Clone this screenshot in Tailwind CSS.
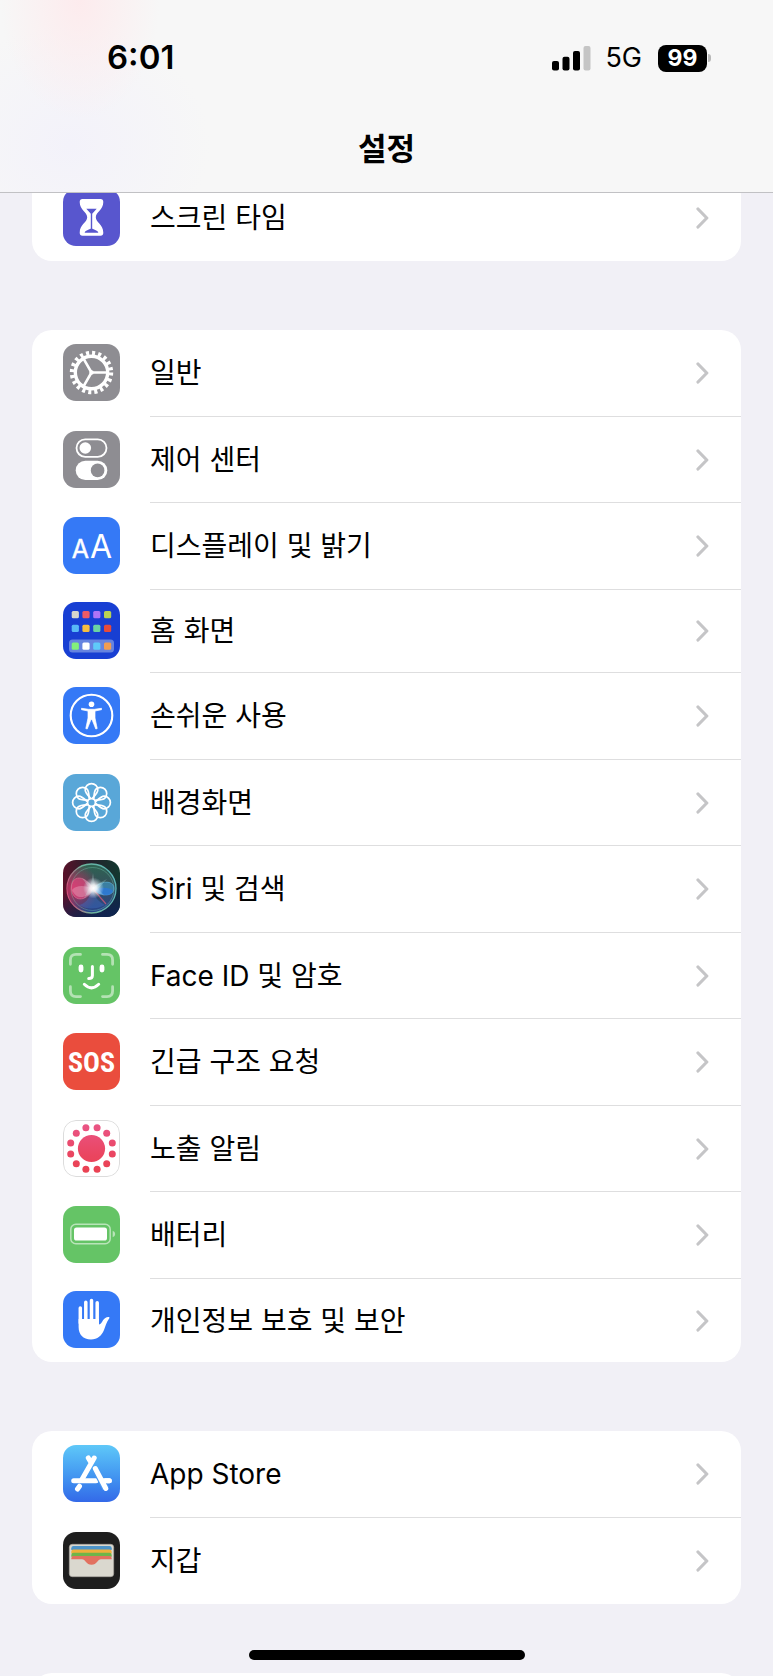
<!DOCTYPE html>
<html lang="ko">
<head>
    <meta charset="UTF-8">
    <meta name="viewport" content="width=device-width, initial-scale=1.0">
    <title>설정</title>
    <script src="https://cdn.jsdelivr.net/npm/@tailwindcss/browser@4"></script>
</head>
<body class="relative h-screen overflow-hidden bg-[#f1f0f6] font-['Inter','Noto_Sans_CJK_KR',sans-serif] text-black">
    <!-- Shared shapes -->
    <svg class="hidden" aria-hidden="true">
        <symbol id="chevron" viewBox="0 0 14 24">
            <path d="M3 3 L11.8 12 L3 21" fill="none" stroke="#c5c5c7" stroke-width="3.2" stroke-linecap="round" stroke-linejoin="round"/>
        </symbol>
        <symbol id="petal" viewBox="-28.5 -28.5 57 57">
            <path d="M-6.3 -12.6 A6.3 6.3 0 0 1 6.3 -12.6 C6.3 -9.8 4.5 -8.2 0 -3.2 C-4.5 -8.2 -6.3 -9.8 -6.3 -12.6Z" fill="none" stroke="#fff" stroke-width="1.7"/>
        </symbol>
    </svg>

    <!-- Header -->
    <header class="fixed inset-x-0 top-0 z-10 h-[193px] border-b border-[#c1c1c4] bg-[#f7f7f7] bg-[radial-gradient(ellipse_80px_120px_at_80px_0px,#fdebed,transparent),radial-gradient(ellipse_140px_120px_at_70px_145px,#f3f2fa,transparent)]">
        <div class="flex h-[116px] items-center justify-between pr-[62px] pl-[107px]">
            <time class="text-[33px] font-semibold">6:01</time>
            <div class="flex items-center">
                <svg class="h-[25px] w-[39px]" viewBox="0 0 39 25" role="img" aria-label="신호 세기">
                    <rect x="0" y="15" width="7" height="9.5" rx="2"/>
                    <rect x="10.5" y="10.7" width="7" height="13.8" rx="2"/>
                    <rect x="21" y="5" width="7" height="19.5" rx="2"/>
                    <rect x="31.5" y="0" width="7" height="24.5" rx="2" fill="#c5c5c5"/>
                </svg>
                <span class="ml-[14px] text-[27px]">5G</span>
                <div class="ml-4 flex h-[27px] w-[49px] items-center justify-center rounded-lg bg-black text-[23px] font-bold text-white">99</div>
                <div class="ml-px h-2 w-[3px] rounded-r-full bg-[#b8b8b8]"></div>
            </div>
        </div>
        <h1 class="flex h-[66px] items-center justify-center text-[31px] font-semibold">설정</h1>
    </header>

    <main class="flex flex-col gap-[69px] px-8 pt-[175px] text-[28px]">
        <ul class="shrink-0 overflow-hidden rounded-[20px] bg-white">
            <li class="h-[86px]">
                <a href="#" class="flex h-full gap-[30px] pl-[31px]">
                    <svg class="mt-[14px] size-[57px] shrink-0 rounded-[13px] bg-[#5856ce]" viewBox="0 0 57 57">
                        <path d="M19.5 10 H37.5 Q40.3 10 40.3 13 C40.3 21 32.8 23 32.8 28.3 C32.8 33.5 40.3 35.5 40.3 43.7 Q40.3 46.7 37.5 46.7 H19.5 Q16.7 46.7 16.7 43.7 C16.7 35.5 24.2 33.5 24.2 28.3 C24.2 23 16.7 21 16.7 13 Q16.7 10 19.5 10Z" fill="#fff"/>
                        <path d="M23.3 19.8 H33.7 L29.2 24.7 V39.5 C30.5 40.7 35.3 41.3 35.3 43.8 H21.7 C21.7 41.3 26.5 40.7 27.8 39.5 V24.7Z" fill="#5856ce"/>
                    </svg>
                    <span class="flex h-full flex-1 items-center justify-between pr-8">스크린 타임
                        <svg class="h-6 w-[14px]"><use href="#chevron"/></svg>
                    </span>
                </a>
            </li>
        </ul>

        <ul class="shrink-0 overflow-hidden rounded-[20px] bg-white">
            <li class="h-[87px]">
                <a href="#" class="flex h-full gap-[30px] pl-[31px]">
                    <svg class="mt-[14px] size-[57px] shrink-0 rounded-[13px] bg-[#8e8d92]" viewBox="0 0 57 57" fill="none" stroke="#fff">
                        <circle cx="28.5" cy="28.5" r="19" stroke-width="5.4" stroke-dasharray="3 2.969"/>
                        <circle cx="28.5" cy="28.5" r="16.2" stroke-width="3.4"/>
                        <path d="M28.5 28.5 H44 M28.5 28.5 L20.8 15.1 M28.5 28.5 L20.8 41.9" stroke-width="2.6"/>
                        <circle cx="28.5" cy="28.5" r="1.5" stroke-width="1.5"/>
                    </svg>
                    <span class="flex h-full flex-1 items-center justify-between border-b border-[#dededf] pr-8">일반
                        <svg class="h-6 w-[14px]"><use href="#chevron"/></svg>
                    </span>
                </a>
            </li>
            <li class="h-[86px]">
                <a href="#" class="flex h-full gap-[30px] pl-[31px]">
                    <svg class="mt-[14px] size-[57px] shrink-0 rounded-[13px] bg-[#8e8d92]" viewBox="0 0 57 57">
                        <rect x="13.5" y="8.4" width="30" height="17.4" rx="8.7" fill="none" stroke="#fff" stroke-width="1.8"/>
                        <circle cx="22.3" cy="17" r="5.8" fill="#fff"/>
                        <rect x="12.7" y="29.7" width="31.6" height="19.4" rx="9.7" fill="#fff"/>
                        <circle cx="34.6" cy="39.4" r="6.8" fill="#8e8d92"/>
                    </svg>
                    <span class="flex h-full flex-1 items-center justify-between border-b border-[#dededf] pr-8">제어 센터
                        <svg class="h-6 w-[14px]"><use href="#chevron"/></svg>
                    </span>
                </a>
            </li>
            <li class="h-[87px]">
                <a href="#" class="flex h-full gap-[30px] pl-[31px]">
                    <svg class="mt-[14px] size-[57px] shrink-0 rounded-[13px] bg-[#3579f6]" viewBox="0 0 57 57" fill="#fff" text-anchor="middle" aria-hidden="true">
                        <text x="17.3" y="40.5" font-size="25" stroke="#fff" stroke-width=".4">A</text>
                        <text x="38" y="40.5" font-size="32">A</text>
                    </svg>
                    <span class="flex h-full flex-1 items-center justify-between border-b border-[#dededf] pr-8">디스플레이 및 밝기
                        <svg class="h-6 w-[14px]"><use href="#chevron"/></svg>
                    </span>
                </a>
            </li>
            <li class="h-[83px]">
                <a href="#" class="flex h-full gap-[30px] pl-[31px]">
                    <svg class="mt-[12px] size-[57px] shrink-0 rounded-[13px] bg-[#183fd3]" viewBox="0 0 57 57">
                        <rect x="6" y="37.6" width="45" height="13" rx="3.5" fill="#6583e0"/>
                        <rect x="8.7" y="9" width="7.2" height="7.2" rx="1.5" fill="#d6d6cd"/>
                        <rect x="19.4" y="9" width="7.2" height="7.2" rx="1.5" fill="#ec5b66"/>
                        <rect x="30.2" y="9" width="7.2" height="7.2" rx="1.5" fill="#ae74f7"/>
                        <rect x="41" y="9" width="7.2" height="7.2" rx="1.5" fill="#b8d254"/>
                        <rect x="8.7" y="22.7" width="7.2" height="7.2" rx="1.5" fill="#58b9f7"/>
                        <rect x="19.4" y="22.7" width="7.2" height="7.2" rx="1.5" fill="#f5bd40"/>
                        <rect x="30.2" y="22.7" width="7.2" height="7.2" rx="1.5" fill="#6bd3a3"/>
                        <rect x="41" y="22.7" width="7.2" height="7.2" rx="1.5" fill="#e64b3c"/>
                        <rect x="8.7" y="40.6" width="7.2" height="7.2" rx="1.5" fill="#83f07b"/>
                        <rect x="19.4" y="40.6" width="7.2" height="7.2" rx="1.5" fill="#fff"/>
                        <rect x="30.2" y="40.6" width="7.2" height="7.2" rx="1.5" fill="#5fcaf9"/>
                        <rect x="41" y="40.6" width="7.2" height="7.2" rx="1.5" fill="#f19d52"/>
                    </svg>
                    <span class="flex h-full flex-1 items-center justify-between border-b border-[#dededf] pr-8">홈 화면
                        <svg class="h-6 w-[14px]"><use href="#chevron"/></svg>
                    </span>
                </a>
            </li>
            <li class="h-[87px]">
                <a href="#" class="flex h-full gap-[30px] pl-[31px]">
                    <svg class="mt-[14px] size-[57px] shrink-0 rounded-[13px] bg-[#3579f6]" viewBox="0 0 57 57">
                        <circle cx="28.5" cy="28.5" r="20.8" fill="none" stroke="#fff" stroke-width="2.1"/>
                        <circle cx="28.5" cy="17.2" r="2.8" fill="#fff"/>
                        <path d="M18.5 21.3 L25.5 22.3 H31.5 L38.5 21.3 L38.5 22.7 L32 24 V31 L34.2 41.5 L32.8 42 L29 32.5 H28 L24.2 42 L22.8 41.5 L25 31 V24 L18.5 22.7Z" fill="#fff" stroke="#fff" stroke-width=".7" stroke-linejoin="round"/>
                    </svg>
                    <span class="flex h-full flex-1 items-center justify-between border-b border-[#dededf] pr-8">손쉬운 사용
                        <svg class="h-6 w-[14px]"><use href="#chevron"/></svg>
                    </span>
                </a>
            </li>
            <li class="h-[86px]">
                <a href="#" class="flex h-full gap-[30px] pl-[31px]">
                    <svg class="mt-[14px] size-[57px] shrink-0 rounded-[13px] bg-[#59a7d8]" viewBox="-28.5 -28.5 57 57">
                        <use href="#petal" x="-28.5" y="-28.5" width="57" height="57"/>
                        <use href="#petal" x="-28.5" y="-28.5" width="57" height="57" transform="rotate(45)"/>
                        <use href="#petal" x="-28.5" y="-28.5" width="57" height="57" transform="rotate(90)"/>
                        <use href="#petal" x="-28.5" y="-28.5" width="57" height="57" transform="rotate(135)"/>
                        <use href="#petal" x="-28.5" y="-28.5" width="57" height="57" transform="rotate(180)"/>
                        <use href="#petal" x="-28.5" y="-28.5" width="57" height="57" transform="rotate(225)"/>
                        <use href="#petal" x="-28.5" y="-28.5" width="57" height="57" transform="rotate(270)"/>
                        <use href="#petal" x="-28.5" y="-28.5" width="57" height="57" transform="rotate(315)"/>
                        <circle r="3.8" fill="#59a7d8" stroke="#fff" stroke-width="1.5"/>
                    </svg>
                    <span class="flex h-full flex-1 items-center justify-between border-b border-[#dededf] pr-8">배경화면
                        <svg class="h-6 w-[14px]"><use href="#chevron"/></svg>
                    </span>
                </a>
            </li>
            <li class="h-[87px]">
                <a href="#" class="flex h-full gap-[30px] pl-[31px]">
                    <svg class="mt-[14px] size-[57px] shrink-0 rounded-[13px]" viewBox="0 0 57 57">
                        <defs>
                            <linearGradient id="siri-bg" x1="0" y1=".4" x2="1" y2=".3">
                                <stop offset="0" stop-color="#5c1029"/>
                                <stop offset=".5" stop-color="#27202c"/>
                                <stop offset="1" stop-color="#12382f"/>
                            </linearGradient>
                            <linearGradient id="siri-floor" x1=".3" y1="0" x2=".6" y2="1">
                                <stop offset=".45" stop-color="#0e2352" stop-opacity="0"/>
                                <stop offset="1" stop-color="#0e2352" stop-opacity=".9"/>
                            </linearGradient>
                            <linearGradient id="siri-orb" x1=".4" y1="0" x2=".5" y2="1">
                                <stop offset="0" stop-color="#2f7058"/>
                                <stop offset=".5" stop-color="#3a5564"/>
                                <stop offset="1" stop-color="#2a4a98"/>
                            </linearGradient>
                            <linearGradient id="siri-rim" x1="0" y1=".6" x2="1" y2=".4">
                                <stop offset="0" stop-color="#d24a78"/>
                                <stop offset=".4" stop-color="#6db39b"/>
                                <stop offset="1" stop-color="#5ab5b8"/>
                            </linearGradient>
                            <radialGradient id="siri-red" cx=".1" cy=".5" r=".55">
                                <stop offset="0" stop-color="#c22c5e"/>
                                <stop offset="1" stop-color="#c22c5e" stop-opacity="0"/>
                            </radialGradient>
                            <radialGradient id="siri-glow">
                                <stop offset="0" stop-color="#fff"/>
                                <stop offset=".3" stop-color="#fff" stop-opacity=".85"/>
                                <stop offset="1" stop-color="#d4f4ff" stop-opacity="0"/>
                            </radialGradient>
                        </defs>
                        <rect width="57" height="57" fill="url(#siri-bg)"/>
                        <rect width="57" height="57" fill="url(#siri-floor)"/>
                        <circle cx="28.5" cy="28.5" r="24.5" fill="url(#siri-orb)" fill-opacity=".85" stroke="url(#siri-rim)" stroke-width="1.3"/>
                        <circle cx="28.5" cy="28.5" r="24" fill="url(#siri-red)"/>
                        <circle cx="29.5" cy="29" r="21.5" fill="none" stroke="#7fd0b8" stroke-opacity=".35"/>
                        <path d="M30 29 C22 14 8 15 8.5 28 C9 42 23 43 30 29Z" fill="#e04a80" fill-opacity=".65" stroke="#ff9ab5" stroke-opacity=".6" stroke-width=".6"/>
                        <path d="M30 29 C24 26 14 24 9 30 C14 41 24 38 30 29Z" fill="#e7a5bd" fill-opacity=".45"/>
                        <path d="M30 29 C38 20 50 20 51 28 C51 37 38 37 30 29Z" fill="#3f9fd0" fill-opacity=".6" stroke="#74c9f2" stroke-opacity=".7" stroke-width=".6"/>
                        <path d="M30 29 C36 28 46 26 50 31 C47 38 37 36 30 29Z" fill="#2a78e0" fill-opacity=".7"/>
                        <path d="M29 30 C26 40 21 44 16 45 Q28 52 42 45 C36 42 32 38 30 30Z" fill="#4270c8" fill-opacity=".4"/>
                        <path d="M30 29 L43 44" stroke="#e05c7c" stroke-width="1.2" stroke-opacity=".7"/>
                        <path d="M30 13 L32 25 L44 19 L35 29 L42 36 L30 32 L21 38 L26 28 L19 18 L28 24Z" fill="#bdf3ea" fill-opacity=".25"/>
                        <circle cx="30.5" cy="28" r="10.5" fill="url(#siri-glow)"/>
                    </svg>
                    <span class="flex h-full flex-1 items-center justify-between border-b border-[#dededf] pr-8">Siri 및 검색
                        <svg class="h-6 w-[14px]"><use href="#chevron"/></svg>
                    </span>
                </a>
            </li>
            <li class="h-[86px]">
                <a href="#" class="flex h-full gap-[30px] pl-[31px]">
                    <svg class="mt-[14px] size-[57px] shrink-0 rounded-[13px] bg-[#65c466]" viewBox="0 0 57 57" fill="none" stroke="#fff" stroke-linecap="round">
                        <path d="M7.4 17.3 V13 Q7.4 7.4 13 7.4 H17.5 M39.5 7.4 H44 Q49.6 7.4 49.6 13 V17.3 M49.6 39.7 V44 Q49.6 49.6 44 49.6 H39.5 M17.5 49.6 H13 Q7.4 49.6 7.4 44 V39.7" stroke="#b4e2b4" stroke-width="2.8"/>
                        <path d="M18 20 V23 M39 20 V23" stroke-width="4.8"/>
                        <path d="M29.4 19.5 V28.5 Q29.4 31.5 25.7 31.5" stroke-width="3"/>
                        <path d="M21.3 37.3 Q28.5 44.5 35.7 37.3" stroke-width="3"/>
                    </svg>
                    <span class="flex h-full flex-1 items-center justify-between border-b border-[#dededf] pr-8">Face ID 및 암호
                        <svg class="h-6 w-[14px]"><use href="#chevron"/></svg>
                    </span>
                </a>
            </li>
            <li class="h-[87px]">
                <a href="#" class="flex h-full gap-[30px] pl-[31px]">
                    <svg class="mt-[14px] size-[57px] shrink-0 rounded-[13px] bg-[#ea4d3d] font-['Roboto_Condensed','Liberation_Sans_Narrow',sans-serif] font-bold" viewBox="0 0 57 57" fill="#fff" text-anchor="middle" aria-hidden="true">
                        <text x="28.5" y="39" font-size="28">SOS</text>
                    </svg>
                    <span class="flex h-full flex-1 items-center justify-between border-b border-[#dededf] pr-8">긴급 구조 요청
                        <svg class="h-6 w-[14px]"><use href="#chevron"/></svg>
                    </span>
                </a>
            </li>
            <li class="h-[86px]">
                <a href="#" class="flex h-full gap-[30px] pl-[31px]">
                    <svg class="mt-[14px] size-[57px] shrink-0 rounded-[13px] bg-white" viewBox="0 0 57 57">
                        <defs>
                            <linearGradient id="exposure" x1="0" y1="7" x2="0" y2="50" gradientUnits="userSpaceOnUse">
                                <stop offset="0" stop-color="#ea5483"/>
                                <stop offset=".65" stop-color="#ea4560"/>
                                <stop offset="1" stop-color="#ea4253"/>
                            </linearGradient>
                        </defs>
                        <rect x=".5" y=".5" width="56" height="56" rx="12.5" fill="none" stroke="#dcdcdc"/>
                        <g fill="url(#exposure)">
                            <circle cx="28.5" cy="28.5" r="13.6"/>
                            <circle cx="22.9" cy="7.7" r="3.5"/>
                            <circle cx="34.1" cy="7.7" r="3.5"/>
                            <circle cx="43.7" cy="13.3" r="3.5"/>
                            <circle cx="49.3" cy="22.9" r="3.5"/>
                            <circle cx="49.3" cy="34.1" r="3.5"/>
                            <circle cx="43.7" cy="43.7" r="3.5"/>
                            <circle cx="34.1" cy="49.3" r="3.5"/>
                            <circle cx="22.9" cy="49.3" r="3.5"/>
                            <circle cx="13.3" cy="43.7" r="3.5"/>
                            <circle cx="7.7" cy="34.1" r="3.5"/>
                            <circle cx="7.7" cy="22.9" r="3.5"/>
                            <circle cx="13.3" cy="13.3" r="3.5"/>
                        </g>
                    </svg>
                    <span class="flex h-full flex-1 items-center justify-between border-b border-[#dededf] pr-8">노출 알림
                        <svg class="h-6 w-[14px]"><use href="#chevron"/></svg>
                    </span>
                </a>
            </li>
            <li class="h-[87px]">
                <a href="#" class="flex h-full gap-[30px] pl-[31px]">
                    <svg class="mt-[14px] size-[57px] shrink-0 rounded-[13px] bg-[#65c466]" viewBox="0 0 57 57">
                        <rect x="7.8" y="18.3" width="39.4" height="19.4" rx="5" fill="none" stroke="#b9e4b9" stroke-width="1.5"/>
                        <rect x="11" y="21.4" width="33" height="13.2" rx="2.6" fill="#fff"/>
                        <path d="M49.7 24.7 Q52.2 25.7 52.2 28 Q52.2 30.3 49.7 31.3Z" fill="#b9e4b9"/>
                    </svg>
                    <span class="flex h-full flex-1 items-center justify-between border-b border-[#dededf] pr-8">배터리
                        <svg class="h-6 w-[14px]"><use href="#chevron"/></svg>
                    </span>
                </a>
            </li>
            <li class="h-[83px]">
                <a href="#" class="flex h-full gap-[30px] pl-[31px]">
                    <svg class="mt-[12px] size-[57px] shrink-0 rounded-[13px] bg-[#3579f6]" viewBox="0 0 57 57">
                        <path d="M17.3 17 V32 M22.8 11.2 V32 M28.5 9.4 V32 M34.2 11.8 V32" stroke="#fff" stroke-width="3.5" stroke-linecap="round"/>
                        <path d="M15.6 28 H36 V33.5 C38 33.5 38.8 31 40 29.3 C41.5 27 44 25.6 46.3 26.2 C46.8 26.8 46.2 27.6 45.5 28.4 C43.5 31 42.6 35 41 39 C38.8 44.6 34.5 48.4 28 48.4 C20 48.4 15.6 43.5 15.6 36Z" fill="#fff"/>
                    </svg>
                    <span class="flex h-full flex-1 items-center justify-between pr-8">개인정보 보호 및 보안
                        <svg class="h-6 w-[14px]"><use href="#chevron"/></svg>
                    </span>
                </a>
            </li>
        </ul>

        <ul class="shrink-0 overflow-hidden rounded-[20px] bg-white">
            <li class="h-[87px]">
                <a href="#" class="flex h-full gap-[30px] pl-[31px]">
                    <svg class="mt-[14px] size-[57px] shrink-0 rounded-[13px] bg-linear-to-b from-[#5fc8f8] to-[#3469e8]" viewBox="0 0 57 57" fill="none" stroke="#fff" stroke-width="5" stroke-linecap="round">
                        <path d="M25.3 13 L28 17.5 M31.2 13 L19.2 34"/>
                        <path d="M10.7 35.7 H33 M42 35.7 H46.3"/>
                        <path d="M33 25.5 L42.8 43.5" stroke="#4b98f1" stroke-width="7" stroke-linecap="butt"/>
                        <path d="M32.3 23.5 L42.8 43.5 M40.5 35.7 H46.3"/>
                        <path d="M16.5 41.2 L14.5 44"/>
                    </svg>
                    <span class="flex h-full flex-1 items-center justify-between border-b border-[#dededf] pr-8">App Store
                        <svg class="h-6 w-[14px]"><use href="#chevron"/></svg>
                    </span>
                </a>
            </li>
            <li class="h-[86px]">
                <a href="#" class="flex h-full gap-[30px] pl-[31px]">
                    <svg class="mt-[14px] size-[57px] shrink-0 rounded-[13px] bg-[#1e1e1e]" viewBox="0 0 57 57">
                        <rect x="6.3" y="12.3" width="44.4" height="32.4" rx="3" fill="#dad8cf" stroke="#a7a59e" stroke-width=".6"/>
                        <path d="M8.3 18 V16.2 Q8.3 14 10.5 14 H46.5 Q48.7 14 48.7 16.2 V18Z" fill="#4d94c8"/>
                        <path d="M8.3 21.5 V19.7 Q8.3 17.5 10.5 17.5 H46.5 Q48.7 17.5 48.7 19.7 V21.5Z" fill="#efb03c"/>
                        <path d="M8.3 24.7 V23 Q8.3 20.8 10.5 20.8 H46.5 Q48.7 20.8 48.7 23 V24.7Z" fill="#6fb549"/>
                        <path d="M8.3 27.3 V26.2 Q8.3 24 10.5 24 H46.5 Q48.7 24 48.7 26.2 V27.3 H38 C34.5 27.3 34 32.8 28.5 32.8 C23 32.8 22.5 27.3 19 27.3Z" fill="#e27160"/>
                    </svg>
                    <span class="flex h-full flex-1 items-center justify-between pr-8">지갑
                        <svg class="h-6 w-[14px]"><use href="#chevron"/></svg>
                    </span>
                </a>
            </li>
        </ul>

        <div class="h-20 shrink-0 rounded-[20px] bg-white"></div>
    </main>

    <!-- Home indicator -->
    <div class="fixed bottom-4 left-1/2 z-10 h-[10px] w-[276px] -translate-x-1/2 rounded-full bg-black"></div>
</body>
</html>
